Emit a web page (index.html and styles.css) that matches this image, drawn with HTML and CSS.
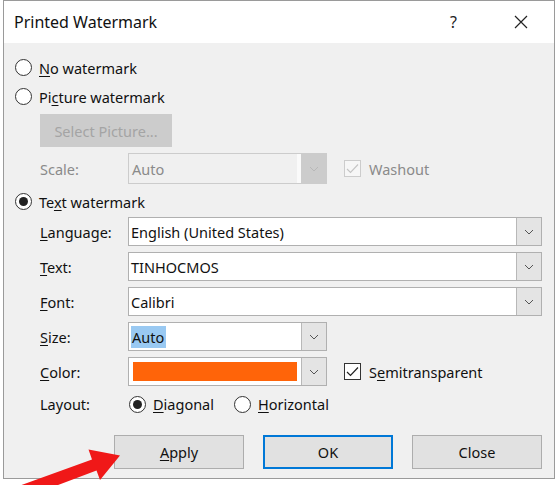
FILE: index.html
```html
<!DOCTYPE html>
<html>
<head>
<meta charset="utf-8">
<link rel="stylesheet" href="styles.css">
</head>
<body>
<div class="dialog">
  <div class="titlebar">
    <span class="title">Printed Watermark</span>
    <span class="help">?</span>
    <svg class="close-x" width="14" height="14" viewBox="0 0 14 14"><path d="M1 1 L13 13 M13 1 L1 13" stroke="#222" stroke-width="1.2" fill="none"/></svg>
  </div>
  <div class="content">
    <div class="radio-row"><span class="radio"></span><span><u>N</u>o watermark</span></div>
    <div class="radio-row"><span class="radio"></span><span>Pi<u>c</u>ture watermark</span></div>
    <div class="indent">
      <div class="btn-disabled">Select Picture...</div>
      <div class="form-row scale-row">
        <span class="label disabled">Scale:</span>
        <div class="combo small disabled-combo"><span class="val">Auto</span><span class="arrow"><svg width="10" height="6" viewBox="0 0 10 6"><path d="M1 1 L5 5 L9 1" stroke="#b8b8b8" fill="none"/></svg></span></div>
        <span class="check disabled-check"><svg width="13" height="11" viewBox="0 0 13 11"><path d="M1 6 L4.5 9.5 L12 1.5" stroke="#c4c4c4" stroke-width="1.1" fill="none"/></svg></span>
        <span class="disabled">Washout</span>
      </div>
    </div>
    <div class="radio-row text-wm"><span class="radio checked"></span><span>Te<u>x</u>t watermark</span></div>
    <div class="indent form">
      <div class="form-row">
        <span class="label"><u>L</u>anguage:</span>
        <div class="combo wide"><span class="val">English (United States)</span><span class="arrow"><svg width="10" height="6" viewBox="0 0 10 6"><path d="M1 1 L5 5 L9 1" stroke="#555" fill="none"/></svg></span></div>
      </div>
      <div class="form-row">
        <span class="label"><u>T</u>ext:</span>
        <div class="combo wide"><span class="val">TINHOCMOS</span><span class="arrow"><svg width="10" height="6" viewBox="0 0 10 6"><path d="M1 1 L5 5 L9 1" stroke="#555" fill="none"/></svg></span></div>
      </div>
      <div class="form-row">
        <span class="label"><u>F</u>ont:</span>
        <div class="combo wide"><span class="val">Calibri</span><span class="arrow"><svg width="10" height="6" viewBox="0 0 10 6"><path d="M1 1 L5 5 L9 1" stroke="#555" fill="none"/></svg></span></div>
      </div>
      <div class="form-row">
        <span class="label"><u>S</u>ize:</span>
        <div class="combo small"><span class="val"><span class="sel">Auto</span></span><span class="arrow"><svg width="10" height="6" viewBox="0 0 10 6"><path d="M1 1 L5 5 L9 1" stroke="#555" fill="none"/></svg></span></div>
      </div>
      <div class="form-row">
        <span class="label"><u>C</u>olor:</span>
        <div class="combo small"><span class="swatch"></span><span class="arrow"><svg width="10" height="6" viewBox="0 0 10 6"><path d="M1 1 L5 5 L9 1" stroke="#555" fill="none"/></svg></span></div>
        <span class="check"><svg width="13" height="11" viewBox="0 0 13 11"><path d="M1 6 L4.5 9.5 L12 1.5" stroke="#222" stroke-width="1.2" fill="none"/></svg></span>
        <span>S<u>e</u>mitransparent</span>
      </div>
      <div class="form-row layout-row">
        <span class="label">Layout:</span>
        <span class="radio checked"></span><span class="opt"><u>D</u>iagonal</span>
        <span class="radio"></span><span><u>H</u>orizontal</span>
      </div>
    </div>
    <div class="buttons">
      <div class="btn"><u>A</u>pply</div>
      <div class="btn default">OK</div>
      <div class="btn">Close</div>
    </div>
  </div>
</div>
<svg class="red-arrow" width="557" height="485" viewBox="0 0 557 485"><polygon points="16,487 92,459.5 88.5,449.5 120,455.5 100,480 96.5,470.5 21,499" fill="#f01818"/></svg>
</body>
</html>
```
FILE: styles.css
```css
html, body {
  margin: 0;
  padding: 0;
  background: #ffffff;
  width: 557px;
  height: 485px;
  overflow: hidden;
  position: relative;
  font-family: "Noto Sans", "Open Sans", sans-serif;
  font-size: 14.5px;
  color: #111;
}
u { text-decoration: underline; text-underline-offset: 2px; text-decoration-thickness: 1px; }
.dialog {
  box-sizing: border-box;
  margin-left: 3px;
  width: 552px;
  height: 479px;
  border: 1px solid #9a9a9a;
  background: #f0f0f0;
  display: flex;
  flex-direction: column;
}
.titlebar {
  height: 42px;
  background: #fff;
  display: flex;
  align-items: center;
  padding-left: 10px;
  flex-shrink: 0;
}
.title { font-size: 16px; flex: 1; color: #111; }
.help { font-size: 16px; margin-right: 57px; color: #222; }
.close-x { margin-right: 26px; }
.content {
  padding: 10px 12px 0 11px;
  display: flex;
  flex-direction: column;
}
.radio-row {
  height: 29px;
  display: flex;
  align-items: center;
  gap: 7px;
}
.radio {
  box-sizing: border-box;
  width: 17px;
  height: 17px;
  border: 1px solid #333;
  border-radius: 50%;
  background: #fff;
  display: inline-flex;
  align-items: center;
  justify-content: center;
  flex-shrink: 0;
}
.radio.checked::after {
  content: "";
  width: 9px;
  height: 9px;
  border-radius: 50%;
  background: #222;
}
.indent { margin-left: 25px; display: flex; flex-direction: column; }
.btn-disabled {
  margin-top: 3px;
  width: 132px;
  height: 33px;
  box-sizing: border-box;
  background: #cccccc;
  color: #a4a4a4;
  display: flex;
  align-items: center;
  justify-content: center;
}
.form-row {
  display: flex;
  align-items: center;
  height: 29px;
}
.scale-row { margin-top: 6px; height: 31px; }
.text-wm { height: 31px; margin-top: 2px; }
.form { gap: 6px; }
.label { width: 88px; flex-shrink: 0; }
.disabled { color: #8a8a8a; }
.combo {
  box-sizing: border-box;
  height: 100%;
  border: 1px solid #b0b0b0;
  background: #fff;
  display: flex;
  align-items: stretch;
}
.combo.wide { width: 415px; }
.combo.small { width: 199px; }
.combo .val { flex: 1; display: flex; align-items: center; padding-left: 2px; }
.arrow {
  box-sizing: border-box;
  width: 25px;
  border-left: 1px solid #b8b8b8;
  background: #e4e4e4;
  display: flex;
  align-items: center;
  justify-content: center;
}
.disabled-combo { border-color: #cccccc; background: #f0f0f0; }
.disabled-combo .val { color: #8a8a8a; padding-left: 3px; border-right: 4px solid #fafafa; }
.disabled-combo .arrow { background: #cccccc; border-left: none; }
.sel { background: #99c9f2; padding: 1px 2px 1px 1px; }
.swatch {
  flex: 1;
  margin: 4px 4px 4px 4px;
  background: #ff6409;
}
.check {
  box-sizing: border-box;
  width: 17px;
  height: 17px;
  border: 1px solid #333;
  background: #fff;
  margin-left: 17px;
  margin-right: 8px;
  display: inline-flex;
  align-items: center;
  justify-content: center;
  flex-shrink: 0;
}
.disabled-check { border-color: #cccccc; background: #f6f6f6; }
.layout-row { height: 30px; margin-top: -3px; }
.layout-row .radio { margin-right: 7px; }
.layout-row .label + .radio { margin-left: 1px; }
.opt { margin-right: 20px; }
.buttons {
  display: flex;
  justify-content: flex-end;
  gap: 19px;
  margin-top: 16px;
}
.btn {
  box-sizing: border-box;
  width: 130px;
  height: 34px;
  background: #e1e1e1;
  border: 1px solid #adadad;
  display: flex;
  align-items: center;
  justify-content: center;
}
.btn.default { border: 2px solid #0078d7; }
.red-arrow { position: absolute; left: 0; top: 0; pointer-events: none; }
```
